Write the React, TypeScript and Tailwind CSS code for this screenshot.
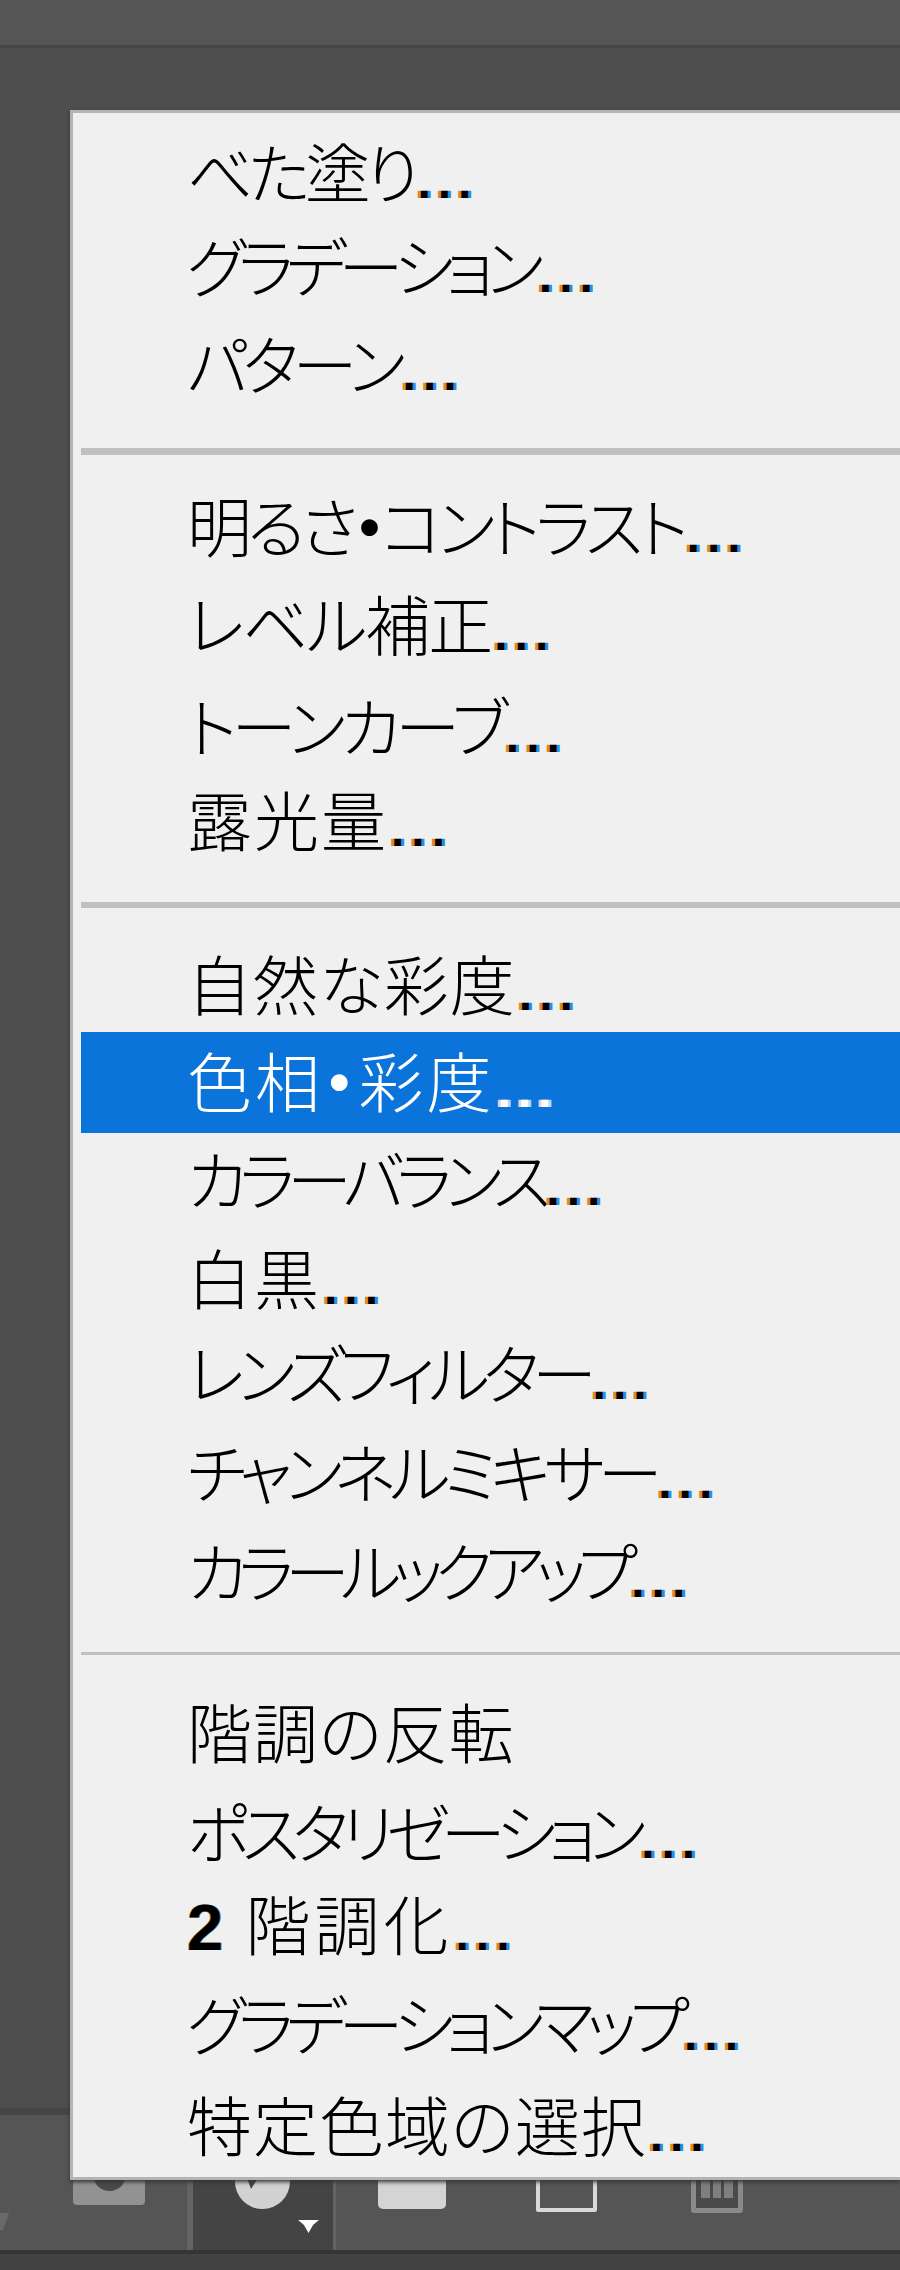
type Item = { label: string; h: string; t: string };
type Group = { sep?: string; pad: string; items: Item[] };

// かなは実物だと詰まって見えるので行ごとに字間を調整
const GROUPS: Group[] = [
  {
    pad: "pt-[10px]",
    items: [
      { label: "べた塗り", h: "h-[98px]", t: "tracking-[-5px]" },
      { label: "グラデーション", h: "h-[90px]", t: "tracking-[-8px]" },
      { label: "パターン", h: "h-[106px]", t: "tracking-[-6px]" },
    ],
  },
  {
    sep: "mt-[31px] mb-[22px] h-[7px]",
    pad: "",
    items: [
      { label: "明るさ・コントラスト", h: "h-[98px]", t: "tracking-[-5px]" },
      { label: "レベル補正", h: "h-[98px]", t: "tracking-[-2px]" },
      { label: "トーンカーブ", h: "h-[106px]", t: "tracking-[-5px]" },
      { label: "露光量", h: "h-[82px]", t: "tracking-[2px]" },
    ],
  },
  {
    sep: "mt-[41px] mb-[28px] h-[6px]",
    pad: "",
    items: [
      { label: "自然な彩度", h: "h-[96px]", t: "tracking-[1px]" },
      { label: "色相・彩度", h: "h-[101px]", t: "tracking-[3px]" },
      { label: "カラーバランス", h: "h-[92px]", t: "tracking-[-8px]" },
      { label: "白黒", h: "h-[106px]", t: "tracking-[2px]" },
      { label: "レンズフィルター", h: "h-[84px]", t: "tracking-[-7px]" },
      { label: "チャンネルミキサー", h: "h-[114px]", t: "tracking-[-7px]" },
      { label: "カラールックアップ", h: "h-[84px]", t: "tracking-[-9px]" },
    ],
  },
  {
    sep: "mt-[39px] mb-[26px] h-[3px]",
    pad: "",
    items: [
      { label: "階調の反転", h: "h-[98px]", t: "tracking-[1px]" },
      { label: "ポスタリゼーション", h: "h-[106px]", t: "tracking-[-8px]" },
      { label: "2 階調化", h: "h-[80px]", t: "tracking-[4px]" },
      { label: "グラデーションマップ", h: "h-[118px]", t: "tracking-[-8px]" },
      { label: "特定色域の選択", h: "h-[84px]", t: "tracking-[1px]" },
    ],
  },
];

const NO_DOTS = "階調の反転";
const ACTIVE = "色相・彩度";

// 「・」と先頭の数字だけ太く見えるので分けて描く
function Label({ text }: { text: string }) {
  if (text.startsWith("2 ")) {
    return (
      <>
        <span className="font-['Liberation_Sans'] font-bold [text-shadow:-1px_0_#d98a2b,1px_0_#2b8fd9]">2</span>
        {text.slice(1)}
      </>
    );
  }
  const [a, b] = text.split("・");
  if (b === undefined) return <>{text}</>;
  return (
    <>
      {a}
      <span className="font-bold">・</span>
      {b}
    </>
  );
}

function Row({ item }: { item: Item }) {
  const active = item.label === ACTIVE;
  return (
    <div
      className={
        "ml-[8px] flex items-center whitespace-nowrap pl-[106px] " +
        item.h +
        (active ? " bg-[#0a74da] pb-[4px] text-white" : " text-black")
      }
    >
      <span className={"text-[65px] font-light leading-none [font-feature-settings:'palt'] " + item.t}>
        <Label text={item.label} />
        {item.label !== NO_DOTS && (
          <span
            className={
              "ml-[3px] font-['Liberation_Sans'] text-[48px] font-bold tracking-[7px] " +
              (active
                ? "[text-shadow:-3px_0_#f4c9de,3px_0_#a9dcf7]"
                : "[text-shadow:-3px_0_#d98a2b,3px_0_#2b8fd9]")
            }
          >
            ...
          </span>
        )}
      </span>
    </div>
  );
}

function Toolbar() {
  return (
    <div className="absolute inset-x-0 bottom-0 h-[162px] border-t-[7px] border-[#454545] bg-[#555555]">
      <div className="relative flex h-[135px] items-end">
        <svg className="absolute left-0 top-[98px] h-[17px] w-[10px]" viewBox="0 0 10 17">
          <path d="M0 0 H9 L3 17 H0Z" fill="#6a6a6a" />
        </svg>
        <div className="relative mb-[45px] ml-[73px] h-[60px] w-[72px] rounded-[4px] bg-[#929292]">
          <div className="absolute left-[20px] top-[13px] h-[33px] w-[33px] rounded-full bg-[#4a4a4a]" />
        </div>
        <div className="relative ml-[42px] h-[135px] w-[149px] border-l-[6px] border-r-[3px] border-[#646464] bg-[#444444]">
          <svg className="absolute left-[42px] top-[40px] h-[54px] w-[55px]" viewBox="0 0 55 54">
            <circle cx="27.5" cy="26.5" r="27.5" fill="#d2d2d2" />
            <path d="M6 6 L34 6 L16 34Z" fill="#444444" />
          </svg>
          <svg className="absolute left-[105px] top-[105px] h-[13px] w-[21px]" viewBox="0 0 21 13">
            <path d="M0 0 H21 L15 5 L10.5 13 L6 5Z" fill="#ffffff" />
          </svg>
        </div>
        <div className="mb-[41px] ml-[42px] h-[60px] w-[68px] rounded-b-[5px] bg-[#d4d4d4]" />
        <div className="relative mb-[38px] ml-[90px] h-[60px] w-[61px] rounded-b-[2px] border-[4px] border-[#d8d8d8]">
          <div className="absolute left-[23px] top-0 h-[19px] w-[7px] bg-[#b0b0b0]" />
        </div>
        <div className="mb-[37px] ml-[94px] h-[60px] w-[52px] rounded-b-[3px] border-[5px] border-[#8a8a8a] bg-[#4a4a4a]">
          <div className="flex h-[40px] justify-center gap-[3px]">
            <div className="w-[9px] bg-[#7f7f7f]" />
            <div className="w-[8px] bg-[#7f7f7f]" />
            <div className="w-[9px] bg-[#7f7f7f]" />
          </div>
        </div>
      </div>
      <div className="h-[4px] bg-[#353535]" />
      <div className="h-[16px] bg-[#434343]" />
    </div>
  );
}

export default function App() {
  return (
    <div
      className="relative h-[2270px] w-[900px] overflow-hidden bg-[#4e4e4e]"
      style={{ fontFamily: '"Noto Sans CJK JP", "Noto Sans", sans-serif' }}
    >
      <div className="h-[48px] border-b-[3px] border-[#474747] bg-[#555555]" />
      <Toolbar />
      <div className="absolute left-[70px] right-0 top-[110px] h-[2070px] border-y-[3px] border-l-[3px] border-[#b4b4b4] bg-[#f0f0f0] shadow-[0_2px_4px_#333333]">
        {GROUPS.map((g) => (
          <div key={g.items[0].label} className={g.pad}>
            {g.sep && <div className={"ml-[8px] bg-[#c0c0c0] " + g.sep} />}
            {g.items.map((item) => (
              <Row key={item.label} item={item} />
            ))}
          </div>
        ))}
      </div>
    </div>
  );
}
